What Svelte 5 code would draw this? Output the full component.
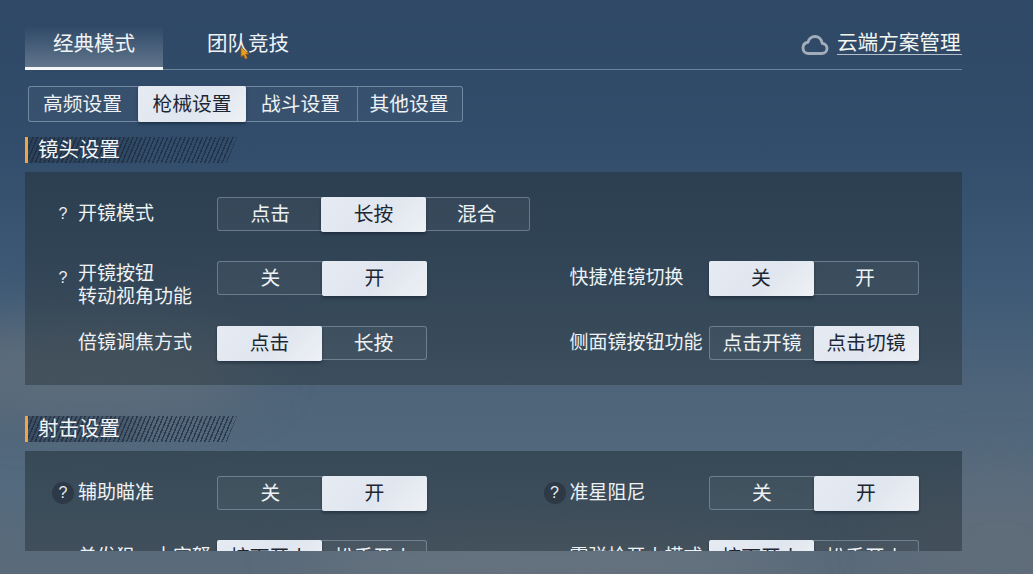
<script>
  const modes = [
    { label: '经典模式', active: true },
    { label: '团队竞技', active: false }
  ];
  const subtabs = [
    { label: '高频设置', cls: 'w110' },
    { label: '枪械设置', cls: 'w108', active: true },
    { label: '战斗设置', cls: 'w111' },
    { label: '其他设置', cls: 'w106' }
  ];
  const sections = [
    {
      title: '镜头设置',
      cls: 'first',
      rows: [
        { help: true, label: '开镜模式', options: ['点击', '长按', '混合'], on: 1, cls: 'three' },
        null,
        { help: true, label: ['开镜按钮', '转动视角功能'], options: ['关', '开'], on: 1 },
        { label: '快捷准镜切换', options: ['关', '开'], on: 0 },
        { label: '倍镜调焦方式', options: ['点击', '长按'], on: 0 },
        { label: '侧面镜按钮功能', options: ['点击开镜', '点击切镜'], on: 1 }
      ]
    },
    {
      title: '射击设置',
      cls: 'second',
      rows: [
        { help: true, dark: true, label: '辅助瞄准', options: ['关', '开'], on: 1 },
        { help: true, dark: true, label: '准星阻尼', options: ['关', '开'], on: 1 },
        { label: '单发狙、十字弩', options: ['按下开火', '松手开火'], on: 0 },
        { label: '霰弹枪开火模式', options: ['按下开火', '松手开火'], on: 0 }
      ]
    }
  ];
</script>

<div class="page">
  <div class="cloud c1"></div>
  <div class="cloud c2"></div>
  <div class="cloud c3"></div>

  <div class="content">
    <header class="modes">
      {#each modes as m}
        <div class="mode" class:active={m.active}>{m.label}</div>
      {/each}
      <div class="cloud-link">
        <svg class="cloud-icon" viewBox="0 0 28 22" width="28" height="22" aria-hidden="true">
          <path d="M7.5 19.5h13.2c3 0 5.3-2.2 5.3-5 0-2.7-2-4.8-4.7-5C20.6 5.200 17.500 2.500 14 2.500c-3.500 0-6.300 2.400-7 5.700C4 8.700 2 11 2 14c0 3 2.400 5.500 5.500 5.500z" fill="none" stroke="#a3adb9" stroke-width="2.900" stroke-linejoin="round"/>
        </svg>
        <span class="cloud-text">云端方案管理</span>
      </div>
    </header>

    <nav class="subtabs">
      {#each subtabs as s}
        <div class="subtab {s.cls}" class:active={s.active}>{s.label}</div>
      {/each}
    </nav>

    <main class="scroll">
      {#each sections as sec}
        <section class={sec.cls}>
          <h2 class="title"><span class="hatch"></span><span class="title-text">{sec.title}</span></h2>
          <div class="panel">
            {#each sec.rows as row}
              {#if row}
                <div class="cell">
                  <div class="help-slot">
                    {#if row.help}<span class="help" class:dark={row.dark}>?</span>{/if}
                  </div>
                  {#if Array.isArray(row.label)}
                    <div class="label double">{row.label[0]}<br />{row.label[1]}</div>
                  {:else}
                    <div class="label">{row.label}</div>
                  {/if}
                  <div class="seg {row.cls || ''}">
                    {#each row.options as o, i}
                      <div class="opt" class:on={i === row.on}>{o}</div>
                    {/each}
                  </div>
                </div>
              {:else}
                <div></div>
              {/if}
            {/each}
          </div>
        </section>
      {/each}
    </main>
  </div>

  <svg class="cursor" viewBox="0 0 10 14" width="10" height="14" aria-hidden="true">
    <path d="M1 1l0 10 2.500-2 1.800 4 2-1-1.800-3.800 3.200-.2z" fill="#e8a020" stroke="#9a5c10" stroke-width=".8"/>
  </svg>
</div>

<style>
  :global(body) {
    margin: 0;
    background: #3b556f;
  }
  .page {
    position: relative;
    width: 1033px;
    height: 574px;
    overflow: hidden;
    font-family: "Noto Sans CJK SC", "Noto Sans", sans-serif;
    color: #eef2f5;
    background: linear-gradient(180deg, #2e4866 0%, #324d6b 25%, #3f5a76 50%, #4f657a 70%, #546a7e 85%, #5b6a79 100%);
  }
  .cloud {
    position: absolute;
    border-radius: 50%;
    filter: blur(28px);
  }
  .c1 { left: -80px; top: 320px; width: 340px; height: 90px; background: rgba(112, 118, 124, .55); }
  .c2 { left: 300px; top: 530px; width: 500px; height: 70px; background: rgba(112, 122, 132, .6); }
  .c3 { left: 880px; top: 470px; width: 240px; height: 120px; background: rgba(104, 112, 122, .5); }

  .content {
    position: relative;
    padding: 26px 71px 0 25px;
  }
  .modes {
    display: flex;
    height: 43px;
    border-bottom: 1px solid rgba(170, 190, 210, .5);
    align-items: stretch;
  }
  .mode {
    font-size: 20.500px;
    line-height: 33px;
    color: #f0f3f6;
    height: 44px;
    box-sizing: border-box;
    margin-bottom: -1px;
  }
  .mode.active {
    width: 138px;
    margin-right: 44px;
    text-align: center;
    background: linear-gradient(180deg, rgba(255, 255, 255, 0) 0%, rgba(255, 255, 255, .24) 100%);
    border-bottom: 3px solid #f4f6f8;
  }
  .cloud-link {
    margin-left: auto;
    display: flex;
    align-items: flex-start;
    gap: 8px;
    height: 43px;
  }
  .cloud-icon { margin-top: 8px; }
  .cloud-text {
    font-size: 20.600px;
    line-height: 23px;
    height: 24px;
    margin-top: 4px;
    border-bottom: 1px solid #b4bfca;
    color: #f4f5ee;
    width: 125px;
    white-space: nowrap;
  }

  .subtabs {
    display: flex;
    width: 435px;
    height: 36px;
    margin: 16px 0 0 3px;
    box-sizing: border-box;
    border: 1px solid rgba(160, 182, 205, .55);
    border-radius: 3px;
    background: rgba(255, 255, 255, .03);
  }
  .subtab {
    font-size: 19.800px;
    line-height: 32px;
    text-align: center;
    box-sizing: border-box;
    border-right: 1px solid rgba(160, 182, 205, .5);
    color: #eef2f5;
    white-space: nowrap;
  }
  .subtab:last-child { border-right: 0; flex: 1; }
  .w110 { width: 109px; border-right: 0; padding-right: 2px; }
  .w108 { width: 108px; }
  .w111 { width: 112px; padding-right: 2px; }
  .w106 { width: 105px; padding-right: 2px; }
  .subtab.active {
    color: #1d2633;
    height: 36px;
    margin-top: -1px;
    border: 0;
    line-height: 34px;
    border-radius: 2px;
    background: linear-gradient(135deg, #e6ebf3 0%, #dfe6ef 55%, #eef1f5 100%);
    box-shadow: 0 2px 3px rgba(10, 20, 35, .45);
  }

  .scroll {
    height: 414px;
    margin-top: 15px;
    overflow: hidden;
  }
  section.second { margin-top: 31px; }
  .title {
    position: relative;
    margin: 0;
    height: 26px;
    box-sizing: border-box;
    width: 212px;
    border-left: 3px solid #f0a544;
    font-weight: 400;
    font-size: 20.500px;
    line-height: 23px;
    color: #f2f5f7;
  }
  .hatch {
    position: absolute;
    inset: 0;
    clip-path: polygon(0 0, 100% 0, 95% 100%, 0 100%);
    background:
      repeating-linear-gradient(113deg, rgba(28, 42, 60, .7) 0 1.500px, transparent 1.500px 4px),
      linear-gradient(90deg, rgba(38, 55, 75, .55) 0%, rgba(38, 55, 75, .3) 45%, rgba(38, 55, 75, 0) 60%);
  }
  .title-text {
    position: relative;
    margin-left: 10px;
  }
  .panel {
    margin-top: 9px;
    width: 937px;
    box-sizing: border-box;
    padding: 25px 0 25px 28px;
    display: grid;
    grid-template-columns: 491.500px 1fr;
    row-gap: 30px;
    background: linear-gradient(180deg, rgba(38, 52, 62, .6) 0%, rgba(46, 58, 66, .52) 100%);
  }
  .first .panel { height: 213px; }
  .cell {
    display: flex;
    align-items: flex-start;
    height: 34px;
  }
  .help-slot {
    width: 25px;
    height: 34px;
    display: flex;
    align-items: center;
    justify-content: center;
    flex: none;
    padding-right: 5px;
    box-sizing: border-box;
  }
  .help {
    width: 22px;
    height: 22px;
    flex: none;
    border-radius: 50%;
    font-size: 16px;
    line-height: 22px;
    text-align: center;
    color: #e6ebef;
    font-family: "Liberation Sans", sans-serif;
  }
  .help.dark { background: rgba(38, 48, 60, .65); }
  .label {
    width: 139px;
    flex: none;
    font-size: 19px;
    line-height: 30px;
    color: #eef2f4;
    white-space: nowrap;
  }
  .label.double {
    line-height: 23px;
    margin-top: -1px;
  }
  .seg {
    display: flex;
    width: 210px;
    height: 34px;
    box-sizing: border-box;
    border: 1px solid rgba(160, 185, 205, .45);
    border-radius: 3px;
    background: rgba(255, 255, 255, .04);
  }
  .seg.three { width: 313px; }
  .opt {
    flex: 1;
    font-size: 19.800px;
    line-height: 30px;
    text-align: center;
    color: #eef2f4;
    white-space: nowrap;
  }
  .opt.on {
    margin: -1px;
    height: 35px;
    line-height: 32px;
    color: #1d2633;
    border-radius: 2px;
    background: linear-gradient(135deg, #e6ebf3 0%, #e0e6ef 55%, #eef1f5 100%);
    box-shadow: 0 2px 3px rgba(10, 20, 35, .4);
  }
  .cursor {
    position: absolute;
    left: 240px;
    top: 46px;
  }
</style>
